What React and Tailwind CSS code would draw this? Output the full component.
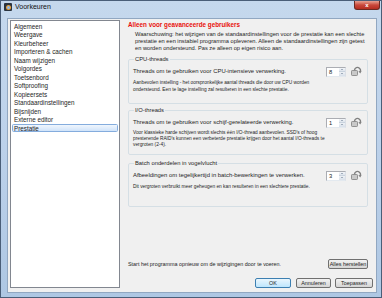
import React from 'react';

const items = [
  'Algemeen',
  'Weergave',
  'Kleurbeheer',
  'Importeren & cachen',
  'Naam wijzigen',
  'Volgordes',
  'Toetsenbord',
  'Softproofing',
  'Kopieersets',
  'Standaardinstellingen',
  'Bijsnijden',
  'Externe editor',
  'Prestatie',
];

const ResetIcon = () => (
  <svg width="11" height="11" viewBox="0 0 11 11" className="shrink-0">
    <rect x="0.5" y="4.5" width="6" height="5" rx="0.8" fill="#c9c9c9" stroke="#7d7d7d" strokeWidth="0.8" />
    <path d="M3.5 4.2 C3.8 1.6 6.5 0.6 8.4 2.2 C9.6 3.2 9.7 4.8 9 6" fill="none" stroke="#808080" strokeWidth="1.4" />
    <path d="M7.4 5.2 L9.2 7.4 L10.6 4.9 Z" fill="#808080" />
  </svg>
);

const SpinBox = ({ value }) => (
  <div className="flex h-[10px] w-[20px] bg-white border border-[#abadb3] border-b-[#e3e9ef] border-r-[#dbdfe6]">
    <span className="flex-1 pl-[2px] text-[5.8px] leading-[8px]">{value}</span>
    <div className="flex w-[6px] flex-col">
      <div className="flex flex-1 items-center justify-center bg-gradient-to-b from-[#f3f5f8] to-[#dde4ec] border-b border-[#c9d3de]">
        <div className="border-x-[1.5px] border-b-[1.5px] border-x-transparent border-b-[#5a6f86]" />
      </div>
      <div className="flex flex-1 items-center justify-center bg-gradient-to-b from-[#eef1f5] to-[#d8e0ea]">
        <div className="border-x-[1.5px] border-t-[1.5px] border-x-transparent border-t-[#5a6f86]" />
      </div>
    </div>
  </div>
);

const Group = ({ title, label, value, children, className }) => (
  <fieldset className={`mr-[5px] rounded-[2px] border border-[#d5dfe5] px-[4px] ${className}`}>
    <legend className="ml-[1px] px-[1px] text-[5.8px] leading-[7px] text-[#1e1e1e]">{title}</legend>
    <div className="mt-[4px] flex h-[10px] items-center">
      <span className="flex-1 text-[5.9px] leading-[7px]">{label}</span>
      <SpinBox value={value} />
      <div className="ml-[5px] mr-[1px]">
        <ResetIcon />
      </div>
    </div>
    {children}
  </fieldset>
);

const Button = ({ children, primary, className }) => (
  <button
    className={`h-[10px] rounded-[2px] border text-[5.4px] leading-[8px] ${
      primary
        ? 'border-[#3c7fb1] bg-gradient-to-b from-[#eaf6fd] to-[#bee6fd]'
        : 'border-[#707070] bg-gradient-to-b from-[#f2f2f2] to-[#d5d5d5]'
    } ${className}`}
  >
    {children}
  </button>
);

export default function App() {
  return (
    <div
      className="flex h-[298px] w-[382px] flex-col overflow-hidden border border-[#4a5e78] bg-gradient-to-b from-[#c5d8ed] via-[#bcd1ea] to-[#aec7e3] text-[#1e1e1e]"
      style={{ fontFamily: '"Liberation Sans", Arial, sans-serif' }}
    >
      {/* title bar */}
      <div className="flex h-[17px] shrink-0 items-start">
        <div className="mt-[2px] ml-[3px] flex h-[8px] w-[8px] items-center justify-center rounded-[1px] bg-[#2b3440]">
          <div className="h-[3px] w-[3px] rounded-full bg-[#8fb8e8] ring-1 ring-[#e9a23b]" />
        </div>
        <span className="ml-[3px] mt-[2px] text-[7px] leading-[8px] text-[#111]">Voorkeuren</span>
        <div className="ml-auto mr-[1px] flex h-[9px] w-[26px] items-center justify-center rounded-b-[3px] border border-t-0 border-[#6b2a22] bg-gradient-to-b from-[#e6a193] via-[#c8473a] to-[#b52c1f]">
          <span className="text-[6px] font-bold leading-[6px] text-white">x</span>
        </div>
      </div>

      {/* client area */}
      <div className="mb-[4px] ml-[6px] mr-[4px] flex flex-1 border border-[#91a7c1] bg-[#f0f0f0] pb-[4px] pl-[2px] pt-[1px]">
        {/* list */}
        <div className="w-[110px] shrink-0 border border-[#828790] bg-white px-[1px] pt-[0.5px]">
          {items.map((it) => (
            <div
              key={it}
              className={`h-[8.5px] rounded-[1.5px] border px-[1px] text-[6.3px] leading-[7px] ${
                it === 'Prestatie'
                  ? 'border-[#84acdd] bg-gradient-to-b from-[#f0f6fd] to-[#cfe3fa]'
                  : 'border-transparent'
              }`}
            >
              {it}
            </div>
          ))}
        </div>

        {/* right column */}
        <div className="ml-[8px] flex flex-1 flex-col pr-[3px] pt-[1px]">
          <div className="text-[6.3px] font-bold leading-[8px] text-[#e8100c]">Alleen voor geavanceerde gebruikers</div>
          <p className="mr-[8px] mt-[1.5px] pl-[7px] text-[5.7px] leading-[7px]">
            Waarschuwing: het wijzigen van de standaardinstellingen voor de prestatie kan een slechte prestatie en een
            instabiel programma opleveren. Alleen de standaardinstellingen zijn getest en worden ondersteund. Pas ze
            alleen op eigen risico aan.
          </p>

          <Group
            title="CPU-threads"
            label="Threads om te gebruiken voor CPU-intensieve verwerking."
            value="8"
            className="mt-[4px] pb-[10px]"
          >
            <p className="mt-[2px] text-[4.8px] leading-[7px]">
              Aanbevolen instelling - het oorspronkelijke aantal threads die door uw CPU worden
              <br />
              ondersteund. Een te lage instelling zal resulteren in een slechte prestatie.
            </p>
          </Group>

          <Group
            title="I/O-threads"
            label="Threads om te gebruiken voor schijf-gerelateerde verwerking."
            value="1"
            className="mt-[3px] pb-[6px]"
          >
            <p className="mt-[2px] text-[4.8px] leading-[6px]">
              Voor klassieke harde schijven wordt slechts één I/O-thread aanbevolen. SSD's of hoog
              <br />
              presterende RAID's kunnen een verbeterde prestatie krijgen door het aantal I/O-threads te
              <br />
              vergroten (2-4).
            </p>
          </Group>

          <Group
            title="Batch onderdelen in vogelvlucht"
            label="Afbeeldingen om tegelijkertijd in batch-bewerkingen te verwerken."
            value="3"
            className="mt-[5px] pb-[16px]"
          >
            <p className="mt-[2px] text-[4.8px] leading-[7px]">
              Dit vergroten verbruikt meer geheugen en kan resulteren in een slechtere prestatie.
            </p>
          </Group>

          <div className="flex-1" />

          <div className="mr-[5px] flex items-center">
            <span className="flex-1 text-[5.4px] leading-[7px]">
              Start het programma opnieuw om de wijzigingen door te voeren.
            </span>
            <Button className="w-[40px]">Alles herstellen</Button>
          </div>

          <div className="mt-[9px] flex justify-end gap-[4px]">
            <Button primary className="mr-[1px] w-[36px]">
              OK
            </Button>
            <Button className="w-[35px]">Annuleren</Button>
            <Button className="w-[38px]">Toepassen</Button>
          </div>
        </div>
      </div>
    </div>
  );
}
